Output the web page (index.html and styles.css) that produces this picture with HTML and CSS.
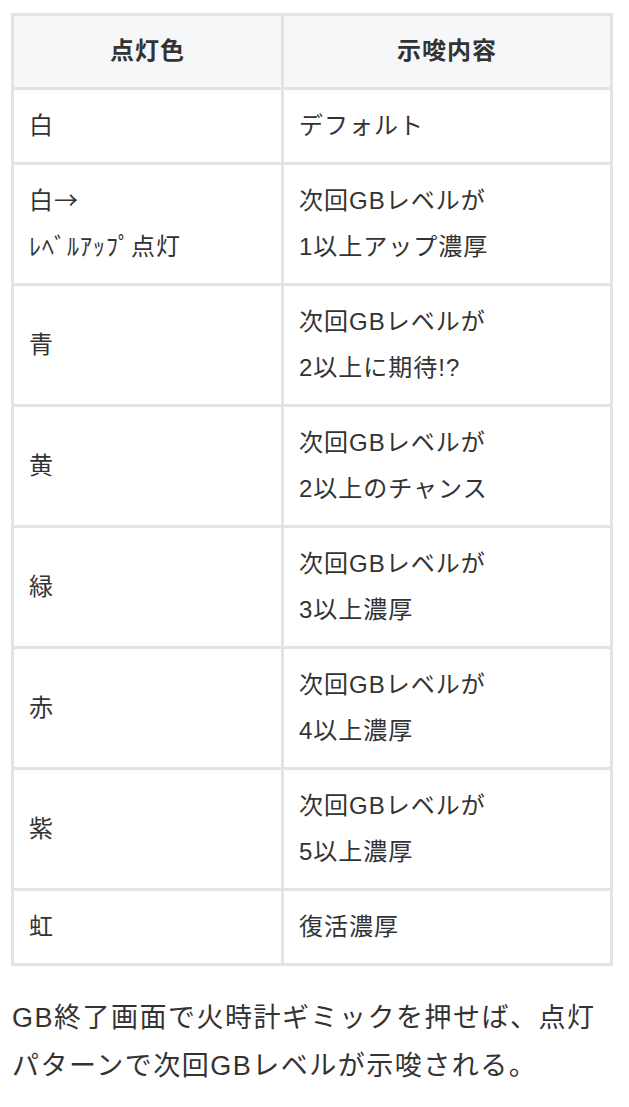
FILE: index.html
```html
<!DOCTYPE html>
<html lang="ja">
<head>
<meta charset="utf-8">
<title>点灯パターン</title>
<link rel="stylesheet" href="styles.css">
</head>
<body>
<main class="page">
  <table class="lamp-table">
    <colgroup>
      <col class="col-color">
      <col class="col-hint">
    </colgroup>
    <thead>
      <tr><th>点灯色</th><th>示唆内容</th></tr>
    </thead>
    <tbody>
      <tr><td>白</td><td>デフォルト</td></tr>
      <tr><td>白<span class="cjk">→</span><br>ﾚﾍﾞﾙｱｯﾌﾟ点灯</td><td>次回GBレベルが<br>1以上アップ濃厚</td></tr>
      <tr><td>青</td><td>次回GBレベルが<br>2以上に期待!?</td></tr>
      <tr><td>黄</td><td>次回GBレベルが<br>2以上のチャンス</td></tr>
      <tr><td>緑</td><td>次回GBレベルが<br>3以上濃厚</td></tr>
      <tr><td>赤</td><td>次回GBレベルが<br>4以上濃厚</td></tr>
      <tr><td>紫</td><td>次回GBレベルが<br>5以上濃厚</td></tr>
      <tr><td>虹</td><td>復活濃厚</td></tr>
    </tbody>
  </table>
  <p class="note">GB終了画面で火時計ギミックを押せば、点灯パターンで次回GBレベルが示唆される。</p>
</main>
</body>
</html>
```
FILE: styles.css
```css
html, body {
  margin: 0;
  padding: 0;
  background: #ffffff;
}

body {
  font-family: "Liberation Sans", "Noto Sans CJK JP", sans-serif;
  color: #333333;
}

.page {
  padding: 13px 16px 0 11px;
}

.lamp-table {
  width: 602px;
  table-layout: fixed;
  border-collapse: separate;
  border-spacing: 0;
  border-top: 3px solid #e3e3e3;
  border-left: 3px solid #e3e3e3;
}

.col-color {
  width: 270px;
}

.col-hint {
  width: 329px;
}

.lamp-table th,
.lamp-table td {
  box-sizing: border-box;
  border-right: 3px solid #e3e3e3;
  border-bottom: 3px solid #e3e3e3;
  font-size: 24px;
  letter-spacing: 1px;
  line-height: 46px;
  text-align: left;
  vertical-align: middle;
}

.lamp-table th {
  background: #f6f7f8;
  font-weight: bold;
  text-align: center;
  padding: 12px 15px 13px;
  color: #333333;
}

.lamp-table td {
  padding: 13px 15px;
}

.cjk {
  font-family: "Noto Sans CJK JP", sans-serif;
  line-height: 0;
}

.note {
  margin: 28px 0 0 1px;
  font-size: 27px;
  letter-spacing: 1.5px;
  line-height: 48px;
  color: #333333;
}
```
